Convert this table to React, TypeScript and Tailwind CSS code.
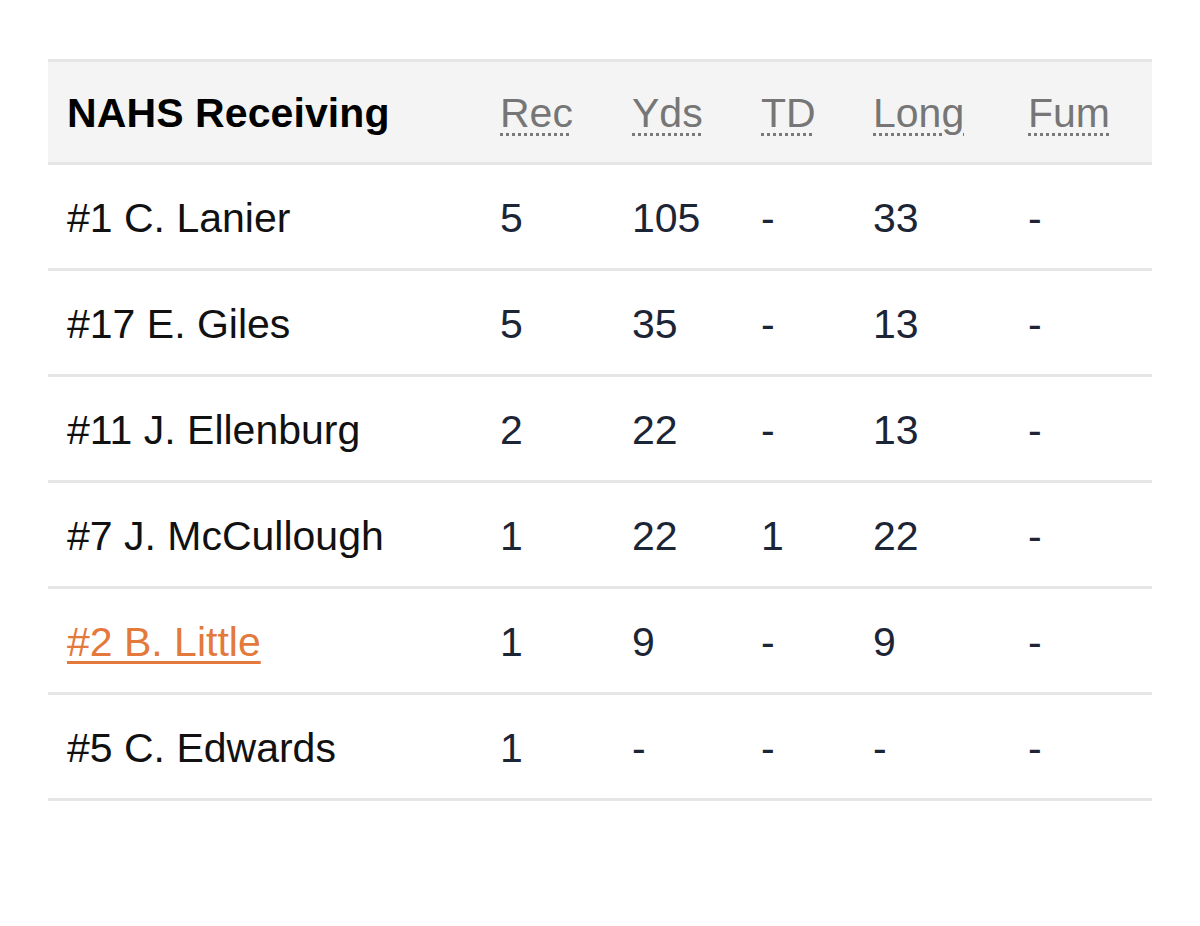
const rows = [
  { name: '#1 C. Lanier', rec: '5', yds: '105', td: '-', long: '33', fum: '-' },
  { name: '#17 E. Giles', rec: '5', yds: '35', td: '-', long: '13', fum: '-' },
  { name: '#11 J. Ellenburg', rec: '2', yds: '22', td: '-', long: '13', fum: '-' },
  { name: '#7 J. McCullough', rec: '1', yds: '22', td: '1', long: '22', fum: '-' },
  { name: '#2 B. Little', rec: '1', yds: '9', td: '-', long: '9', fum: '-', link: true },
  { name: '#5 C. Edwards', rec: '1', yds: '-', td: '-', long: '-', fum: '-' },
];

const heads = ['Rec', 'Yds', 'TD', 'Long', 'Fum'];

const cols = 'grid grid-cols-[433px_132px_129px_112px_155px_143px] items-center';

export default function App() {
  return (
    <div className="min-h-[926px] bg-white pt-[59px] px-[48px] font-['Liberation_Sans',Arial,sans-serif] text-[41px]">
      <div className="w-[1104px]">
        {/* Header */}
        <div className={`${cols} h-[106px] pt-[3px] bg-[#f4f4f4] border-y-[3px] border-[#e6e6e6]`}>
          <div className="pl-[19px] font-bold text-black tracking-[0.1px]">NAHS Receiving</div>
          {heads.map((h) => (
            <div key={h} className="pl-[19px] text-[#767676]">
              <span className="underline decoration-dotted decoration-[3px] underline-offset-[6px] decoration-[#7a7a7a]">
                {h}
              </span>
            </div>
          ))}
        </div>

        {/* Rows */}
        {rows.map((r) => (
          <div key={r.name} className={`${cols} h-[106px] pt-[4px] border-b-[3px] border-[#e6e6e6]`}>
            <div className="pl-[19px]">
              {r.link ? (
                <a className="text-[#e3793b] underline decoration-[3px] underline-offset-[5px]">{r.name}</a>
              ) : (
                <span className="text-[#111]">{r.name}</span>
              )}
            </div>
            {[r.rec, r.yds, r.td, r.long, r.fum].map((v, i) => (
              <div key={i} className="pl-[19px] text-[#1c2536]">
                {v}
              </div>
            ))}
          </div>
        ))}
      </div>
    </div>
  );
}
